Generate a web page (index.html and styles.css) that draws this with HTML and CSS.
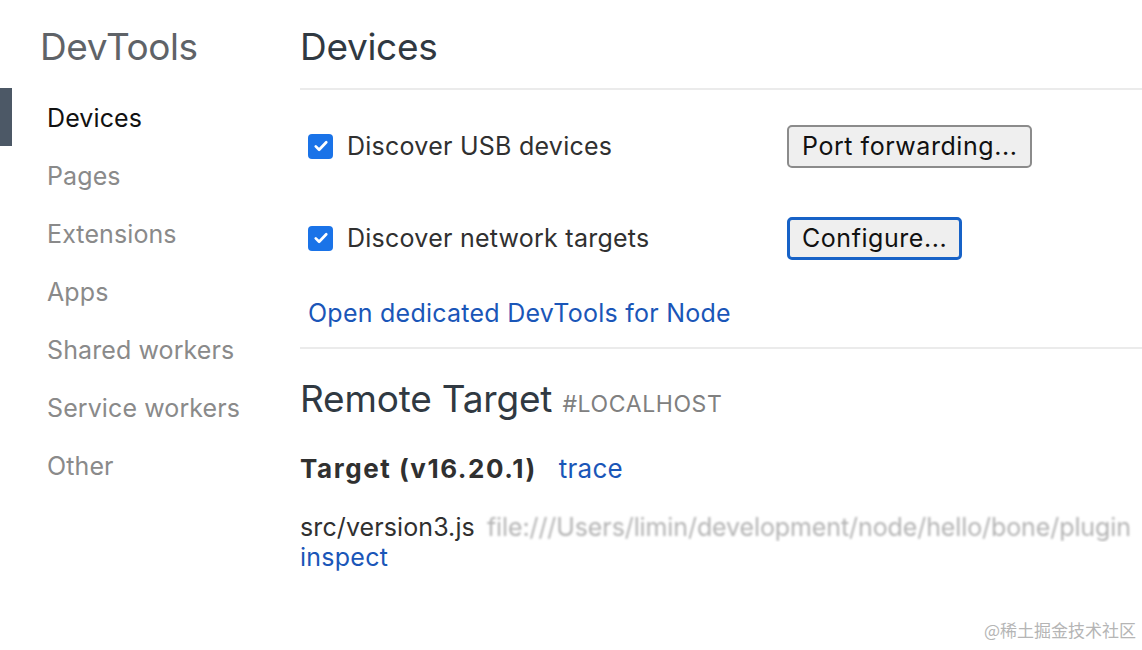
FILE: index.html
```html
<!DOCTYPE html>
<html>
<head>
<meta charset="utf-8">
<link rel="stylesheet" href="styles.css">
</head>
<body>
<div class="page">
  <nav class="sidebar">
    <div class="brand">DevTools</div>
    <ul class="menu">
      <li class="item active">Devices</li>
      <li class="item">Pages</li>
      <li class="item">Extensions</li>
      <li class="item">Apps</li>
      <li class="item">Shared workers</li>
      <li class="item">Service workers</li>
      <li class="item">Other</li>
    </ul>
  </nav>
  <main class="content">
    <h1 class="title">Devices</h1>
    <section class="settings">
      <div class="row">
        <label class="check"><span class="box"><svg viewBox="0 0 24 24" width="18" height="18"><path d="M5 12.5l4.5 4.5L19 7" fill="none" stroke="#fff" stroke-width="3.6" stroke-linecap="round" stroke-linejoin="round"/></svg></span>Discover USB devices</label>
        <button class="btn">Port forwarding...</button>
      </div>
      <div class="row">
        <label class="check"><span class="box"><svg viewBox="0 0 24 24" width="18" height="18"><path d="M5 12.5l4.5 4.5L19 7" fill="none" stroke="#fff" stroke-width="3.6" stroke-linecap="round" stroke-linejoin="round"/></svg></span>Discover network targets</label>
        <button class="btn focused">Configure...</button>
      </div>
      <a class="link node-link">Open dedicated DevTools for Node</a>
    </section>
    <section class="remote">
      <h2 class="remote-title">Remote Target <span class="host">#LOCALHOST</span></h2>
      <div class="target-head"><span class="target-name">Target (v16.20.1)</span><a class="link">trace</a></div>
      <div class="target-line"><span class="script">src/version3.js</span><span class="url">file:///Users/limin/development/node/hello/bone/plugin</span></div>
      <a class="link inspect">inspect</a>
    </section>
  </main>
</div>
<div class="watermark">@稀土掘金技术社区</div>
</body>
</html>
```
FILE: styles.css
```css
html, body {
  margin: 0;
  padding: 0;
  background: #fff;
  font-family: Inter, "Noto Sans", sans-serif;
  color: #333;
  overflow: hidden;
}
.page {
  display: flex;
  width: 1142px;
  height: 650px;
}
.sidebar {
  width: 300px;
  flex: none;
}
.brand {
  padding: 25px 0 0 40px;
  height: 88px;
  box-sizing: border-box;
  font-size: 37px;
  line-height: 44px;
  color: #5f6368;
  letter-spacing: -0.4px;
}
.menu {
  list-style: none;
  margin: 0;
  padding: 0;
}
.item {
  height: 58px;
  line-height: 60px;
  font-size: 25px;
  letter-spacing: 0.1px;
  color: #8a8a8a;
  border-left: 12px solid transparent;
  padding-left: 35px;
}
.item.active {
  color: #111;
  border-left-color: #4c5866;
}
.content {
  flex: 1;
  min-width: 0;
}
.title {
  margin: 0;
  padding-top: 25px;
  box-sizing: border-box;
  font-size: 37px;
  line-height: 44px;
  font-weight: 400;
  color: #303942;
  letter-spacing: -0.3px;
  border-bottom: 2px solid #ebebeb;
  height: 90px;
}
.settings {
  padding: 34px 0 0 8px;
  border-bottom: 2px solid #ebebeb;
  height: 259px;
  box-sizing: border-box;
}
.row {
  display: flex;
  align-items: center;
  height: 44px;
  margin-bottom: 48px;
}
.check {
  display: flex;
  align-items: center;
  width: 479px;
  font-size: 25px;
  letter-spacing: 0.25px;
  color: #303030;
}
.box {
  width: 25px;
  height: 25px;
  border-radius: 4px;
  background: #1a73e8;
  display: flex;
  align-items: center;
  justify-content: center;
  margin-right: 14px;
}
.btn {
  height: 43px;
  padding: 0 13px;
  font-family: Inter, "Noto Sans", sans-serif;
  font-size: 25px;
  letter-spacing: 0.55px;
  color: #111;
  background: #efefef;
  border: 2px solid #8b8b8b;
  border-radius: 5px;
}
.btn.focused {
  border: 3px solid #1762c7;
  padding: 0 12px;
}
.link {
  color: #1a56b8;
  font-size: 25px;
  letter-spacing: 0.25px;
  text-decoration: none;
}
.node-link {
  display: block;
  margin-top: -11px;
  line-height: 32px;
}
.remote-title {
  margin: 0;
  padding-top: 28px;
  font-size: 37px;
  line-height: 44px;
  font-weight: 400;
  color: #303942;
  letter-spacing: -0.2px;
}
.host {
  font-size: 23px;
  color: #808080;
  letter-spacing: 0.6px;
}
.target-head {
  margin-top: 27px;
  display: flex;
  align-items: baseline;
  gap: 22px;
  line-height: 32px;
}
.target-name {
  font-weight: 700;
  font-size: 26px;
  letter-spacing: 1.55px;
  color: #303030;
}
.target-head .link {
  font-size: 26px;
}
.target-line {
  margin-top: 27px;
  white-space: nowrap;
  overflow: hidden;
  font-size: 25px;
  letter-spacing: 0.1px;
  line-height: 30px;
  color: #303030;
}
.url {
  margin-left: 12px;
  color: #b4b4b4;
  letter-spacing: -0.1px;
  filter: blur(0.8px);
}
.inspect {
  display: block;
  line-height: 30px;
}
.watermark {
  position: absolute;
  right: 6px;
  bottom: 8px;
  font-family: "Noto Sans CJK SC", sans-serif;
  font-size: 17px;
  color: #b5b5b5;
}
```
